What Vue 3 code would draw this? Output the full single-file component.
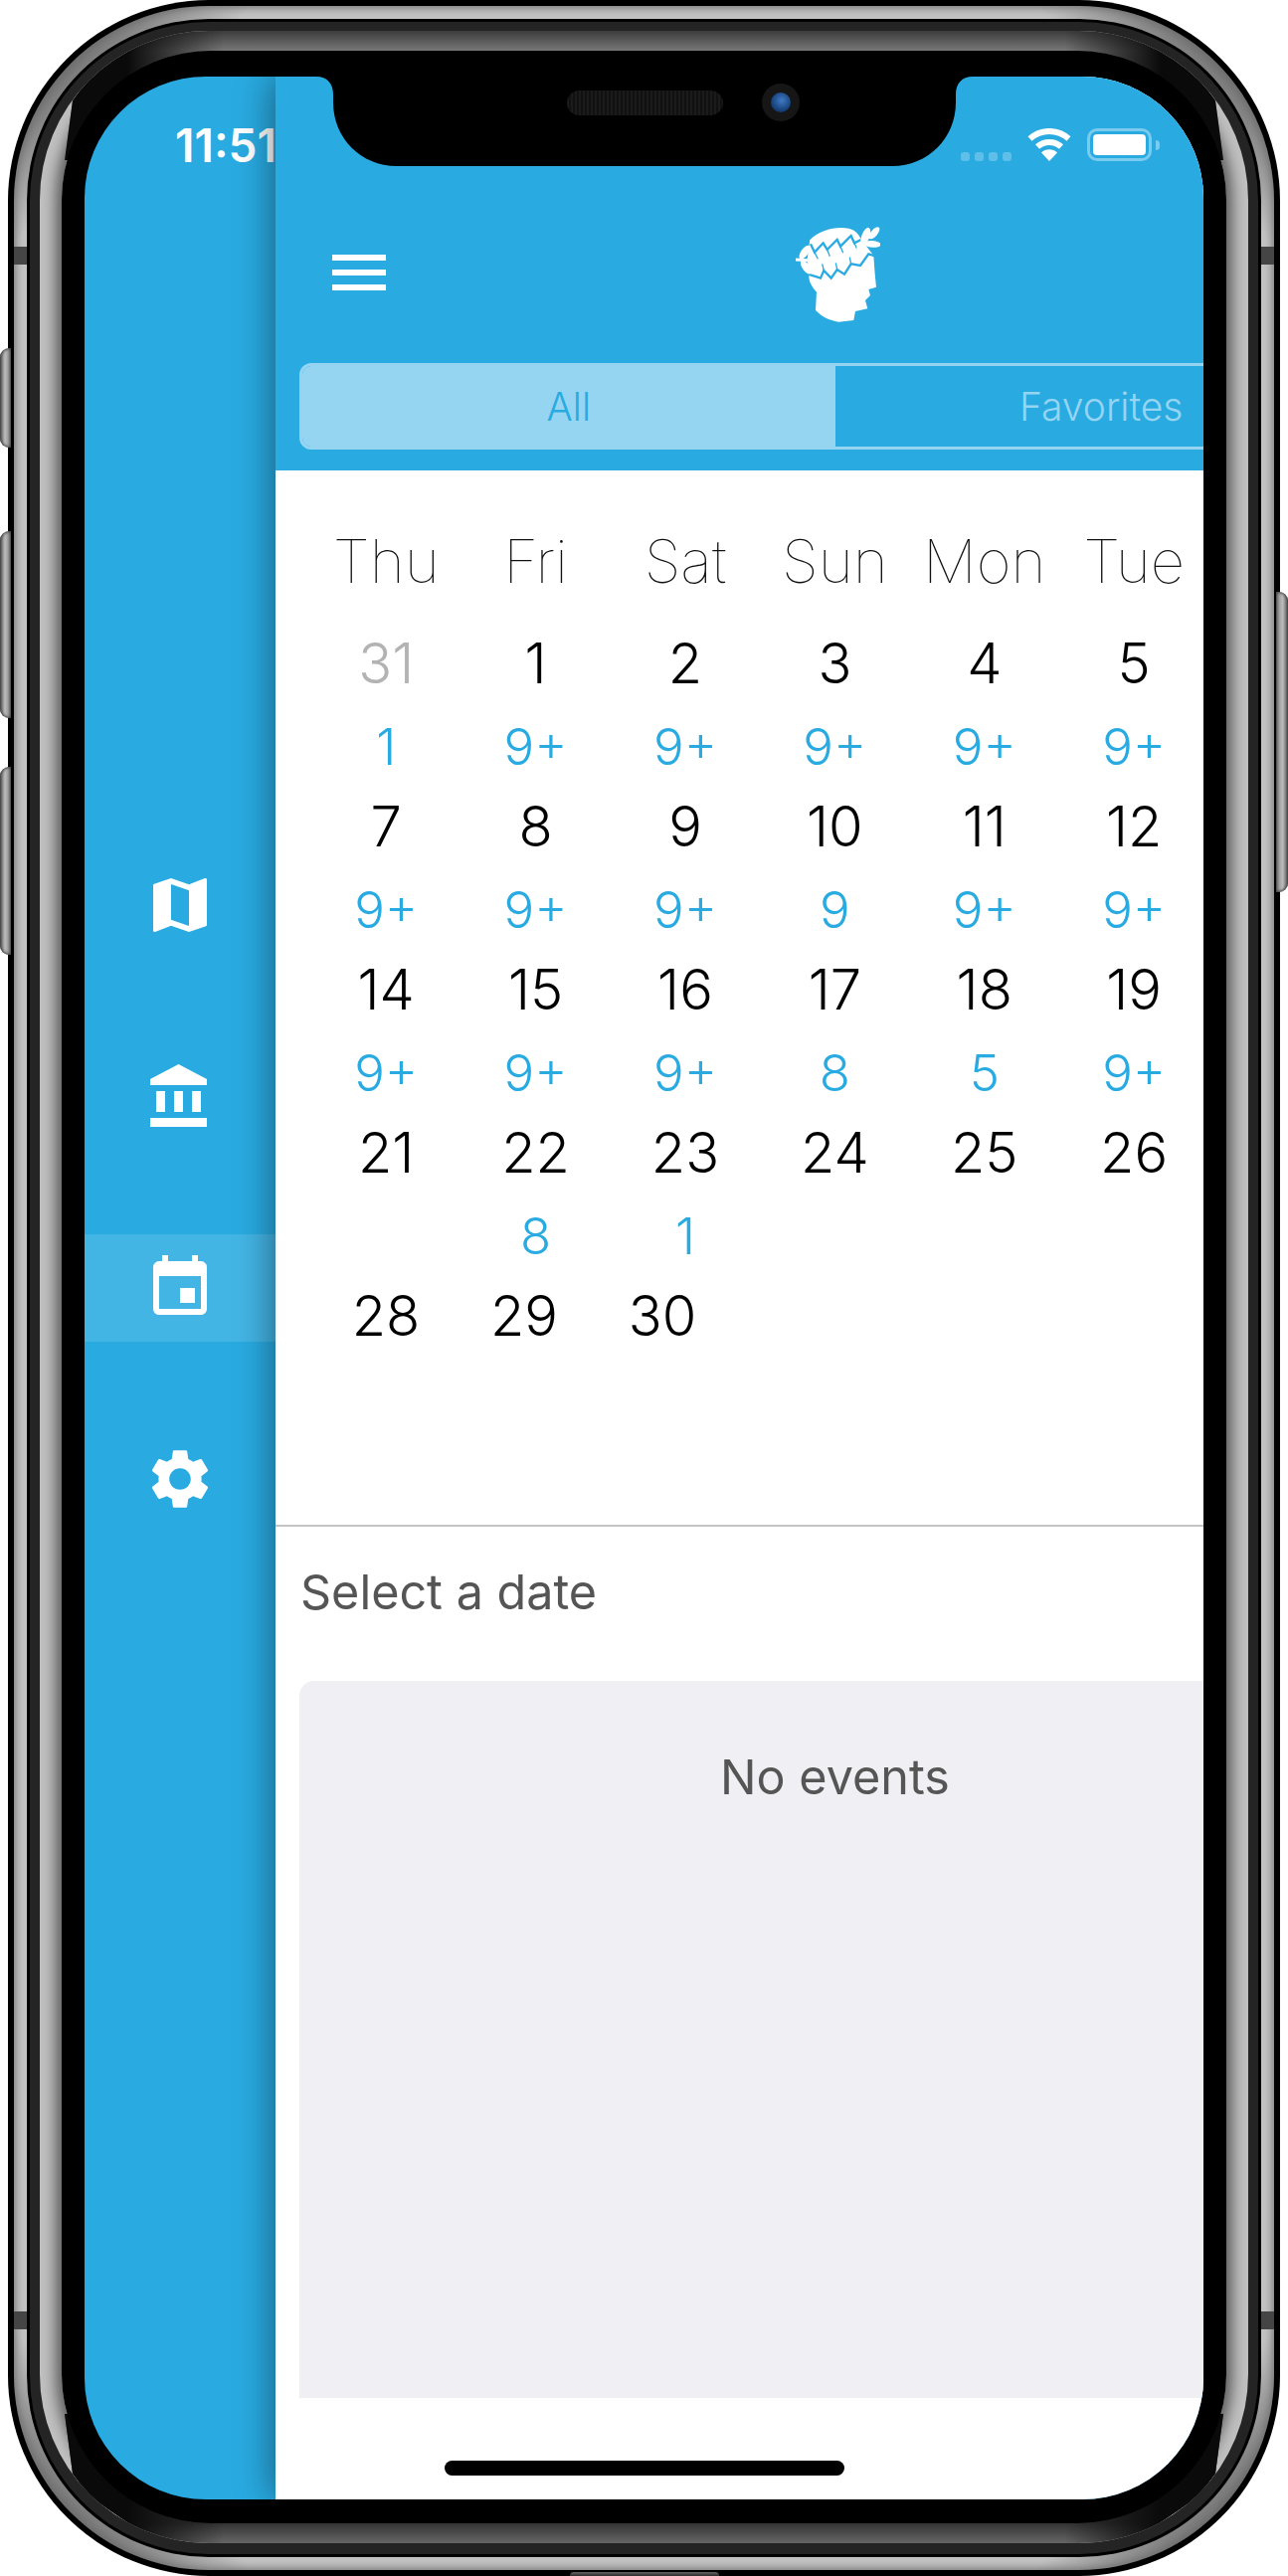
<script setup>
const navItems = [
  {
    name: 'map',
    d: 'M20.5 3l-.16.03L15 5.1 9 3 3.36 4.9c-.21.07-.36.25-.36.48V20.5c0 .28.22.5.5.5l.16-.03L9 18.9l6 2.1 5.64-1.9c.21-.07.36-.25.36-.48V3.5c0-.28-.22-.5-.5-.5zM15 19l-6-2.11V5l6 2.11V19z'
  },
  {
    name: 'museums',
    d: 'M4 10v7h3v-7H4zm6 0v7h3v-7h-3zM2 22h19v-3H2v3zm14-12v7h3v-7h-3zm-4.5-9L2 6v2h19V6l-9.5-5z'
  },
  {
    name: 'calendar',
    active: true,
    d: 'M17 12h-5v5h5v-5zM16 1v2H8V1H6v2H5c-1.11 0-1.99.9-1.99 2L3 19c0 1.1.89 2 2 2h14c1.1 0 2-.9 2-2V5c0-1.1-.9-2-2-2h-1V1h-2zm3 18H5V8h14v11z'
  },
  {
    name: 'settings',
    d: 'M19.14 12.94c.04-.3.06-.61.06-.94 0-.32-.02-.64-.07-.94l2.03-1.58c.18-.14.23-.41.12-.61l-1.92-3.32c-.12-.22-.37-.29-.59-.22l-2.39.96c-.5-.38-1.03-.7-1.62-.94l-.36-2.54c-.04-.24-.24-.41-.48-.41h-3.84c-.24 0-.43.17-.47.41l-.36 2.54c-.59.24-1.13.57-1.62.94l-2.39-.96c-.22-.08-.47 0-.59.22L2.74 8.87c-.12.21-.08.47.12.61l2.03 1.58c-.05.3-.09.63-.09.94s.02.64.07.94l-2.03 1.58c-.18.14-.23.41-.12.61l1.92 3.32c.12.22.37.29.59.22l2.39-.96c.5.38 1.03.7 1.62.94l.36 2.54c.05.24.24.41.48.41h3.84c.24 0 .44-.17.47-.41l.36-2.54c.59-.24 1.13-.56 1.62-.94l2.39.96c.22.08.47 0 .59-.22l1.92-3.32c.12-.22.07-.47-.12-.61l-2.01-1.58zM12 15.6c-1.98 0-3.6-1.62-3.6-3.6s1.62-3.6 3.6-3.6 3.6 1.62 3.6 3.6-1.62 3.6-3.6 3.6z'
  }
]

const weekdays = ['Thu', 'Fri', 'Sat', 'Sun', 'Mon', 'Tue']

const weeks = [
  [['31', '1', true], ['1', '9+'], ['2', '9+'], ['3', '9+'], ['4', '9+'], ['5', '9+']],
  [['7', '9+'], ['8', '9+'], ['9', '9+'], ['10', '9'], ['11', '9+'], ['12', '9+']],
  [['14', '9+'], ['15', '9+'], ['16', '9+'], ['17', '8'], ['18', '5'], ['19', '9+']],
  [['21', ''], ['22', '8'], ['23', '1'], ['24', ''], ['25', ''], ['26', '']]
]

const lastWeek = ['28', '29', '30']

// free-standing laurel leaves of the logo: cx, cy, rx, ry, angle
const leaves = [
  [142, 160, 24, 11, -55],
  [146, 205, 24, 11, 55],
  [326, 112, 28, 12, -70],
  [352, 102, 22, 10, -50],
  [346, 135, 26, 10, 5]
]
</script>

<template>
  <div class="stage">
    <span class="side-btn side-btn--mute"></span>
    <span class="side-btn side-btn--up"></span>
    <span class="side-btn side-btn--down"></span>
    <span class="side-btn side-btn--power"></span>

    <div class="phone">
      <div class="band">
        <span class="antenna antenna--tl"></span>
        <span class="antenna antenna--tr"></span>
        <span class="antenna antenna--bl"></span>
        <span class="antenna antenna--br"></span>
        <div class="gap">
          <div class="dark">
            <div class="ring">
              <span class="ring__shade"></span>
              <span class="ring__strip ring__strip--top"></span>
              <span class="ring__strip ring__strip--bottom"></span>
              <div class="bezel">
                <div class="screen">
                  <aside class="drawer">
                    <div class="time">11:51</div>
                    <nav class="drawer__nav">
                      <div
                        v-for="item in navItems"
                        :key="item.name"
                        class="drawer__item"
                        :class="{ 'drawer__item--active': item.active }"
                      >
                        <svg class="drawer__icon" viewBox="0 0 24 24"><path :d="item.d" fill="#fff" /></svg>
                      </div>
                    </nav>
                  </aside>

                  <main class="main">
                    <header class="header">
                      <div class="status">
                        <div class="signal"><i></i><i></i><i></i><i></i></div>
                        <svg class="wifi" viewBox="0 0 44 33">
                          <path d="M2.5 10.5A29 29 0 0 1 41.5 10.5" fill="none" stroke="#fff" stroke-width="6" />
                          <path d="M10 18.5A18 18 0 0 1 34 18.5" fill="none" stroke="#fff" stroke-width="6" />
                          <path d="M22 33L14 24.5A11.5 11.5 0 0 1 30 24.5Z" fill="#fff" />
                        </svg>
                        <div class="battery"><span></span></div>
                        <span class="battery-nub"></span>
                      </div>

                      <div class="toolbar">
                        <div class="burger"><span></span><span></span><span></span></div>
                        <svg class="logo" viewBox="100 80 270 295">
                          <path
                            d="M158 122C185 95 235 80 275 88C295 92 305 105 312 120L350 170L354 225L358 265L335 272L340 290L325 305L332 330L295 338L290 365L245 370C215 365 195 355 175 335L178 280C165 265 155 250 155 232L150 180Z"
                            fill="#fff"
                          />
                          <path
                            d="M160 135L172 160L198 132L210 152L240 122L250 142L282 110L292 132L312 122"
                            fill="none"
                            stroke="#29abe2"
                            stroke-width="7"
                          />
                          <path
                            d="M152 226L190 238L200 215L222 238L240 212L262 226L282 195L310 200L335 165L356 172"
                            fill="none"
                            stroke="#29abe2"
                            stroke-width="7"
                          />
                          <path
                            d="M172 160L182 180M210 152L218 172M250 142L258 162M292 132L300 150M200 215L195 195M240 212L236 192M282 195L278 175"
                            fill="none"
                            stroke="#29abe2"
                            stroke-width="4"
                          />
                          <ellipse
                            v-for="(l, i) in leaves"
                            :key="i"
                            :cx="l[0]"
                            :cy="l[1]"
                            :rx="l[2]"
                            :ry="l[3]"
                            :transform="`rotate(${l[4]} ${l[0]} ${l[1]})`"
                            fill="#fff"
                          />
                          <path d="M115 182L175 186" fill="none" stroke="#fff" stroke-width="9" />
                          <path d="M300 150L345 105" fill="none" stroke="#fff" stroke-width="6" />
                        </svg>
                        <div></div>
                      </div>

                      <div class="segments">
                        <div class="segment segment--active">All</div>
                        <div class="segment">Favorites</div>
                      </div>
                    </header>

                    <section class="calendar">
                      <div class="week week--head">
                        <div v-for="day in weekdays" :key="day" class="weekday">{{ day }}</div>
                      </div>
                      <div v-for="(week, w) in weeks" :key="w" class="week">
                        <div v-for="cell in week" :key="cell[0]" class="day">
                          <div class="day__num" :class="{ 'day__num--muted': cell[2] }">{{ cell[0] }}</div>
                          <div class="day__count">{{ cell[1] }}</div>
                        </div>
                      </div>
                      <div class="week week--short">
                        <div v-for="d in lastWeek" :key="d" class="day">
                          <div class="day__num">{{ d }}</div>
                        </div>
                      </div>
                    </section>

                    <section class="events">
                      <div class="events__title">Select a date</div>
                      <div class="events__panel">No events</div>
                    </section>
                  </main>

                  <div class="notch">
                    <svg class="notch__shape" viewBox="0 0 660 90">
                      <path d="M0 0C11 0 17 7 17 18V26C17 62 45 90 81 90H579C615 90 643 62 643 26V18C643 7 649 0 660 0Z" fill="#000" />
                    </svg>
                    <span class="speaker"></span>
                    <span class="camera"><span></span></span>
                  </div>
                  <span class="home-bar"></span>
                </div>
              </div>
            </div>
          </div>
        </div>
      </div>
    </div>
    <span class="bottom-mark"></span>
  </div>
</template>

<style>
html,
body {
  margin: 0;
  background: #fff;
}
</style>

<style scoped>
.stage {
  position: relative;
  width: 1295px;
  height: 2590px;
  overflow: hidden;
  background: #fff;
  font-family: Inter, 'Liberation Sans', sans-serif;
}
.phone {
  box-sizing: border-box;
  width: 1279px;
  height: 2590px;
  margin-left: 8px;
  padding: 6px;
  border-radius: 202px;
  background: #000;
}
.band {
  position: relative;
  box-sizing: border-box;
  height: 100%;
  padding: 13px;
  border-radius: 196px;
  background-color: #c2c2c2;
  background-image:
    linear-gradient(135deg, rgba(60, 60, 60, 0.65) 70px, transparent 170px),
    linear-gradient(225deg, rgba(60, 60, 60, 0.65) 70px, transparent 170px),
    linear-gradient(45deg, rgba(60, 60, 60, 0.65) 70px, transparent 170px),
    linear-gradient(315deg, rgba(60, 60, 60, 0.65) 70px, transparent 170px);
  background-position: left top, right top, left bottom, right bottom;
  background-size: 260px 260px;
  background-repeat: no-repeat;
  box-shadow: inset 0 0 8px 1px #6a6a6a;
}
.gap {
  box-sizing: border-box;
  height: 100%;
  padding: 3px;
  border-radius: 183px;
  background: #000;
}
.dark {
  box-sizing: border-box;
  height: 100%;
  padding: 9px 10px 11px;
  border-radius: 180px;
  background: #242424;
}
.ring {
  position: relative;
  box-sizing: border-box;
  height: 100%;
  padding: 20px 22px;
  border-radius: 170px;
  overflow: hidden;
  background: #c0c0c0;
}
.ring__shade {
  position: absolute;
  inset: 20px 22px;
  border-radius: 150px;
  box-shadow: 0 0 14px 6px #5c5c5c;
}
.ring__strip {
  position: absolute;
  left: 0;
  right: 0;
  height: 160px;
}
.ring__strip--top {
  top: 0;
  background:
    linear-gradient(to right, #0a0a0a 88px, transparent 185px, transparent calc(100% - 185px), #0a0a0a calc(100% - 88px)),
    linear-gradient(to bottom, #3c3c3c, #777 20px);
  clip-path: polygon(88px 0, calc(100% - 88px) 0, calc(100% - 88px) 19px, calc(100% - 50px) 47px, calc(100% - 33px) 70px, calc(100% - 25px) 130px, 25px 130px, 33px 70px, 50px 47px, 88px 19px);
}
.ring__strip--bottom {
  bottom: 0;
  background:
    linear-gradient(to right, #0a0a0a 88px, transparent 185px, transparent calc(100% - 185px), #0a0a0a calc(100% - 88px)),
    linear-gradient(to top, #666, #333 20px);
  clip-path: polygon(25px 30px, calc(100% - 25px) 30px, calc(100% - 33px) 90px, calc(100% - 50px) 113px, calc(100% - 88px) 139px, calc(100% - 88px) 160px, 88px 160px, 88px 139px, 50px 113px, 33px 90px);
}
.bezel {
  position: relative;
  box-sizing: border-box;
  height: 100%;
  padding: 26px 23px 24px;
  border-radius: 150px;
  background: #000;
}
.screen {
  position: relative;
  height: 100%;
  border-radius: 122px;
  overflow: hidden;
  background: #29abe2;
}

.antenna {
  position: absolute;
  width: 13px;
  height: 18px;
  background: #454545;
}
.antenna--tl {
  left: 0;
  top: 242px;
}
.antenna--tr {
  right: 0;
  top: 242px;
}
.antenna--bl {
  left: 0;
  top: 2318px;
}
.antenna--br {
  right: 0;
  top: 2318px;
}

.side-btn {
  position: absolute;
  width: 11px;
  left: 0;
  border-radius: 9px 0 0 9px;
  background: linear-gradient(to right, #666, #bbb 45%, #8a8a8a);
  box-shadow: inset 0 0 3px 1px #3c3c3c;
}
.side-btn--mute {
  top: 350px;
  height: 100px;
}
.side-btn--up {
  top: 534px;
  height: 188px;
}
.side-btn--down {
  top: 771px;
  height: 189px;
}
.side-btn--power {
  left: auto;
  right: 0;
  top: 595px;
  width: 12px;
  height: 302px;
  border-radius: 0 9px 9px 0;
  background: linear-gradient(to left, #666, #bbb 45%, #8a8a8a);
}
.bottom-mark {
  position: absolute;
  left: 573px;
  bottom: 0;
  width: 150px;
  height: 4px;
  border-radius: 10px 10px 0 0;
  background: linear-gradient(to bottom, #666, #2a2a2a);
}

.drawer {
  width: 192px;
  padding-top: 46px;
}
.time {
  padding-left: 91px;
  color: #fff;
  font-size: 46px;
  font-weight: 600;
  line-height: 46px;
  white-space: nowrap;
}
.drawer__nav {
  display: flex;
  flex-direction: column;
  gap: 84.5px;
  margin-top: 687px;
}
.drawer__item {
  display: flex;
  align-items: center;
  justify-content: center;
  height: 108px;
}
.drawer__item--active {
  background: rgba(255, 255, 255, 0.12);
}
.drawer__item:last-child .drawer__icon {
  margin-bottom: 2px;
}
.drawer__icon {
  width: 72px;
  height: 72px;
}

.main {
  position: absolute;
  left: 192px;
  top: 0;
  bottom: 0;
  width: 1125px;
  background: #fff;
  box-shadow: -4px 0 34px rgba(0, 0, 0, 0.42);
}
.header {
  position: relative;
  box-sizing: border-box;
  height: 396px;
  padding-top: 150px;
  background: #29abe2;
}
.status {
  position: absolute;
  top: 52px;
  left: 689px;
  display: flex;
  align-items: flex-end;
  height: 33px;
}
.signal {
  display: flex;
  gap: 5px;
  margin-right: 16px;
}
.signal i {
  width: 9px;
  height: 9px;
  border-radius: 3px;
  background: rgba(255, 255, 255, 0.25);
}
.wifi {
  width: 44px;
  height: 33px;
  margin-right: 16px;
}
.battery {
  box-sizing: border-box;
  width: 65px;
  height: 33px;
  padding: 3px;
  border: 3px solid rgba(255, 255, 255, 0.38);
  border-radius: 10px;
}
.battery span {
  display: block;
  height: 100%;
  border-radius: 4px;
  background: #fff;
}
.battery-nub {
  align-self: center;
  width: 4px;
  height: 10px;
  margin-left: 4px;
  border-radius: 0 5px 5px 0;
  background: rgba(255, 255, 255, 0.38);
}
.toolbar {
  display: grid;
  grid-template-columns: 1fr auto 1fr;
  align-items: center;
}
.burger {
  display: flex;
  flex-direction: column;
  gap: 9px;
  width: 54px;
  margin: 0 0 4px 57px;
}
.burger span {
  height: 6px;
  background: #fff;
}
.logo {
  display: block;
  width: 90px;
  height: 98.3px;
}
.segments {
  display: flex;
  box-sizing: border-box;
  height: 87px;
  margin: 40px 24px 0;
  overflow: hidden;
  border: 3px solid #96d5f2;
  border-radius: 12px;
}
.segment {
  display: flex;
  flex: 1;
  align-items: center;
  justify-content: center;
  color: #96d5f2;
  font-size: 39px;
  font-weight: 300;
}
.segment--active {
  background: #96d5f2;
  color: #29abe2;
}

.calendar {
  height: 1060px;
  padding-top: 55px;
  box-sizing: border-box;
}
.week {
  display: grid;
  grid-template-columns: repeat(7, 150.4px);
  padding-left: 36px;
  text-align: center;
}
.week--head {
  margin-bottom: 26px;
}
.week--short {
  grid-template-columns: repeat(7, 139px);
  padding-left: 41.5px;
}
.weekday {
  color: #111;
  font-size: 60px;
  font-weight: 100;
  line-height: 72px;
}
.day__num {
  color: #000;
  font-size: 56px;
  font-weight: 300;
  line-height: 82px;
}
.day__num--muted {
  color: #b3b3b3;
}
.day__count {
  box-sizing: border-box;
  height: 82px;
  padding-top: 2px;
  color: #29abe2;
  font-size: 51px;
  font-weight: 350;
  line-height: 82px;
}

.events {
  border-top: 2px solid #c4c4c4;
}
.events__title {
  padding: 36px 0 0 25px;
  color: #555;
  font-size: 48.5px;
  font-weight: 400;
  line-height: 60px;
}
.events__panel {
  box-sizing: border-box;
  height: 721px;
  margin: 59px 24px 0;
  padding-top: 67px;
  border-radius: 15px 15px 0 0;
  background: #efeff4;
  color: #555;
  font-size: 48.5px;
  font-weight: 400;
  line-height: 60px;
  text-align: center;
}

.notch {
  position: absolute;
  top: 0;
  left: 233px;
  width: 660px;
  height: 90px;
}
.notch__shape {
  display: block;
  width: 660px;
  height: 90px;
}
.speaker {
  position: absolute;
  top: 14px;
  left: 252px;
  width: 157px;
  height: 25px;
  border-radius: 13px;
  background: repeating-linear-gradient(to right, #1b1b1b 0 2px, #111 2px 4px);
}
.camera {
  position: absolute;
  top: 7px;
  left: 448px;
  width: 38px;
  height: 38px;
  border-radius: 50%;
  background: #161616;
}
.camera span {
  position: absolute;
  top: 9px;
  left: 9px;
  width: 20px;
  height: 20px;
  border-radius: 50%;
  background: radial-gradient(circle at 55% 40%, #3f7ac4, #123a70 70%);
}
.home-bar {
  position: absolute;
  left: 362px;
  bottom: 24px;
  width: 402px;
  height: 15px;
  border-radius: 8px;
  background: #000;
}
</style>
